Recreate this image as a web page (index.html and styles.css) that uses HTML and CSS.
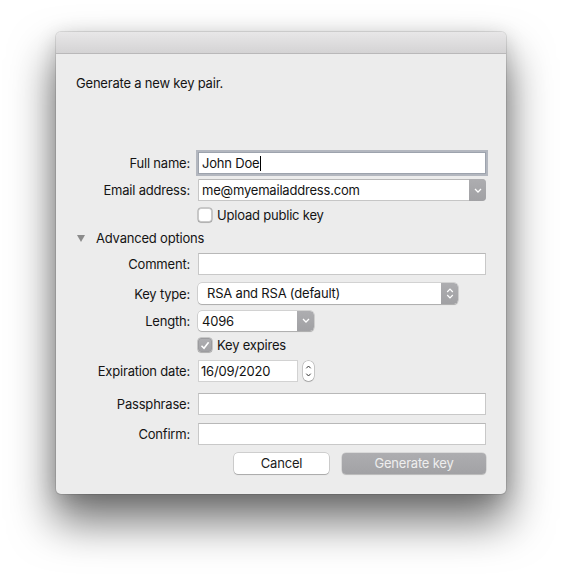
FILE: index.html
```html
<!DOCTYPE html>
<html>
<head>
<meta charset="utf-8">
<link rel="stylesheet" href="styles.css">
</head>
<body>
<div class="window">
  <div class="titlebar"></div>
  <div class="content">
    <p class="intro">Generate a new key pair.</p>
    <div class="form">
      <div class="row row-name">
        <span class="lbl">Full name:</span>
        <div class="field focus">John Doe<span class="caret"></span></div>
      </div>
      <div class="row row-email">
        <span class="lbl">Email address:</span>
        <div class="combo">
          <span class="combo-text">me@myemailaddress.com</span>
          <span class="arrow-btn">
            <svg width="8" height="5" viewBox="0 0 8 5"><path d="M1 1 L4 4 L7 1" fill="none" stroke="#fff" stroke-width="1.3"/></svg>
          </span>
        </div>
      </div>
      <div class="row row-upload">
        <span class="lbl"></span>
        <span class="check"></span>
        <span class="check-text">Upload public key</span>
      </div>
      <div class="row row-adv">
        <span class="disclosure"></span>
        <span class="adv-text">Advanced options</span>
      </div>
      <div class="row row-comment">
        <span class="lbl">Comment:</span>
        <div class="field"></div>
      </div>
      <div class="row row-keytype">
        <span class="lbl">Key type:</span>
        <div class="popup popup-type">
          <span class="popup-text">RSA and RSA (default)</span>
          <span class="arrow-btn">
            <svg width="8" height="11" viewBox="0 0 8 11"><path d="M1.2 4 L4 1.2 L6.8 4 M1.2 7 L4 9.8 L6.8 7" fill="none" stroke="#fff" stroke-width="1.2"/></svg>
          </span>
        </div>
      </div>
      <div class="row row-length">
        <span class="lbl">Length:</span>
        <div class="popup popup-len">
          <span class="popup-text len-text">4096</span>
          <span class="arrow-btn">
            <svg width="8" height="5" viewBox="0 0 8 5"><path d="M1 1 L4 4 L7 1" fill="none" stroke="#fff" stroke-width="1.3"/></svg>
          </span>
        </div>
      </div>
      <div class="row row-expires">
        <span class="lbl"></span>
        <span class="check checked">
          <svg width="10" height="9" viewBox="0 0 10 9"><path d="M1.5 4.8 L4 7.3 L8.6 1.2" fill="none" stroke="#fff" stroke-width="1.6"/></svg>
        </span>
        <span class="check-text">Key expires</span>
      </div>
      <div class="row row-date">
        <span class="lbl">Expiration date:</span>
        <div class="field date-field">16/09/2020</div>
        <div class="stepper">
          <svg width="11" height="20" viewBox="0 0 11 20"><path d="M3.3 7.3 L5.5 5 L7.7 7.3 M3.3 12.7 L5.5 15 L7.7 12.7" fill="none" stroke="#333" stroke-width="1"/></svg>
        </div>
      </div>
      <div class="row row-pass">
        <span class="lbl">Passphrase:</span>
        <div class="field"></div>
      </div>
      <div class="row row-confirm">
        <span class="lbl">Confirm:</span>
        <div class="field"></div>
      </div>
      <div class="row row-buttons">
        <span class="btn btn-cancel">Cancel</span>
        <span class="btn btn-generate">Generate key</span>
      </div>
    </div>
  </div>
</div>
</body>
</html>
```
FILE: styles.css
```css
html, body {
  margin: 0;
  padding: 0;
  background: #ffffff;
}
body {
  font-family: Inter, "Liberation Sans", sans-serif;
  font-size: 13px;
  letter-spacing: -0.2px;
  color: #141414;
  min-height: 574px;
  padding-top: 32px;
  box-sizing: border-box;
}
.window {
  width: 450px;
  margin: 0 auto;
  height: 462px;
  border-radius: 5px;
  background: #ececec;
  box-shadow: 0 0 0 1px rgba(0,0,0,0.10), 0 26px 44px 2px rgba(0,0,0,0.55), 0 4px 20px rgba(0,0,0,0.15);
  overflow: hidden;
  display: flex;
  flex-direction: column;
}
.titlebar {
  height: 21px;
  flex: none;
  background: linear-gradient(#e8e7e8, #d4d3d4);
  border-bottom: 1px solid #b9b8b9;
}
.content {
  padding: 21px 20px 0 20px;
}
.intro {
  margin: 0;
  height: 16px;
  line-height: 16px;
}
.form {
  display: flex;
  flex-direction: column;
}
.row {
  display: flex;
  align-items: center;
}
.lbl {
  width: 114px;
  flex: none;
  text-align: right;
  margin-right: 8px;
  line-height: 16px;
}
.row-name { margin-top: 61px; height: 22px; }
.row-email { margin-top: 5px; height: 22px; }
.row-upload { margin-top: 7px; height: 14px; }
.row-adv { margin-top: 8px; height: 16px; }
.row-comment { margin-top: 7px; height: 22px; }
.row-keytype { margin-top: 8px; height: 21px; }
.row-length { margin-top: 6px; height: 21px; }
.row-expires { margin-top: 7px; height: 14px; }
.row-date { margin-top: 8px; height: 22px; }
.row-pass { margin-top: 11px; height: 22px; }
.row-confirm { margin-top: 8px; height: 22px; }
.row-buttons { margin-top: 8px; height: 21px; justify-content: flex-end; }

.field {
  flex: 1;
  height: 22px;
  box-sizing: border-box;
  background: #fff;
  border: 1px solid #c8c8c8;
  border-top-color: #b8b8b8;
  padding: 0 3px;
  line-height: 20px;
  color: #111;
  display: flex;
  align-items: center;
}
.field.focus {
  border-color: #9da3ad;
  box-shadow: 0 0 0 2px rgba(160,166,176,0.75);
}
.caret {
  display: inline-block;
  width: 1px;
  height: 15px;
  background: #000;
  margin-left: 1px;
}
.combo {
  flex: 1;
  height: 22px;
  box-sizing: border-box;
  display: flex;
  background: #fff;
  border: 1px solid #c6c6c6;
  border-top-color: #b8b8b8;
  border-radius: 0 4px 4px 0;
}
.combo-text {
  flex: 1;
  padding-left: 3px;
  line-height: 20px;
}
.arrow-btn {
  width: 17px;
  flex: none;
  background: linear-gradient(#adadb0, #a1a1a4);
  display: flex;
  align-items: center;
  justify-content: center;
  border-radius: 0 4px 4px 0;
}
.combo .arrow-btn { margin: -1px -1px -1px 0; }
.popup {
  height: 21px;
  box-sizing: border-box;
  display: flex;
  background: #fff;
  border-radius: 4px;
  box-shadow: 0 0 0 0.5px rgba(0,0,0,0.22), 0 1px 1px rgba(0,0,0,0.18);
  overflow: hidden;
}
.popup-type { width: 260px; }
.popup-len { width: 116px; height: 20px; }
.popup-text {
  flex: 1;
  padding-left: 9px;
  line-height: 21px;
}
.len-text { padding-left: 4px; line-height: 20px; }
.check {
  width: 14px;
  height: 14px;
  box-sizing: border-box;
  border-radius: 3px;
  background: #fff;
  box-shadow: 0 0 0 0.5px rgba(0,0,0,0.3), 0 1px 1px rgba(0,0,0,0.12);
  border: 1px solid #c9c9c9;
  flex: none;
  display: flex;
  align-items: center;
  justify-content: center;
}
.check.checked {
  background: linear-gradient(#aeaeb1, #a2a2a5);
  border-color: #9c9c9f;
}
.check-text {
  margin-left: 5px;
  line-height: 16px;
}
.disclosure {
  width: 0;
  height: 0;
  border-left: 4px solid transparent;
  border-right: 4px solid transparent;
  border-top: 7px solid #8b8b8b;
  margin-left: 1px;
  margin-right: 11px;
}
.adv-text { line-height: 16px; }
.date-field {
  flex: none;
  width: 100px;
  border-color: #d2d2d2;
  padding-left: 2px;
}
.stepper {
  margin-left: 5px;
  width: 11px;
  height: 20px;
  box-sizing: border-box;
  background: #fff;
  border-radius: 5px;
  box-shadow: 0 0 0 0.5px rgba(0,0,0,0.3), 0 1px 1px rgba(0,0,0,0.15);
  display: flex;
  align-items: center;
  justify-content: center;
}
.btn {
  height: 21px;
  box-sizing: border-box;
  border-radius: 4px;
  line-height: 21px;
  text-align: center;
}
.btn-cancel {
  width: 95px;
  background: #fff;
  box-shadow: 0 0 0 0.5px rgba(0,0,0,0.25), 0 1px 1px rgba(0,0,0,0.18);
  color: #1b1b1b;
}
.btn-generate {
  width: 144px;
  margin-left: 13px;
  background: linear-gradient(#adadb0, #a2a2a5);
  color: #eeeeee;
  box-shadow: 0 0 0 0.5px rgba(0,0,0,0.15), 0 1px 1px rgba(0,0,0,0.15);
}
```
